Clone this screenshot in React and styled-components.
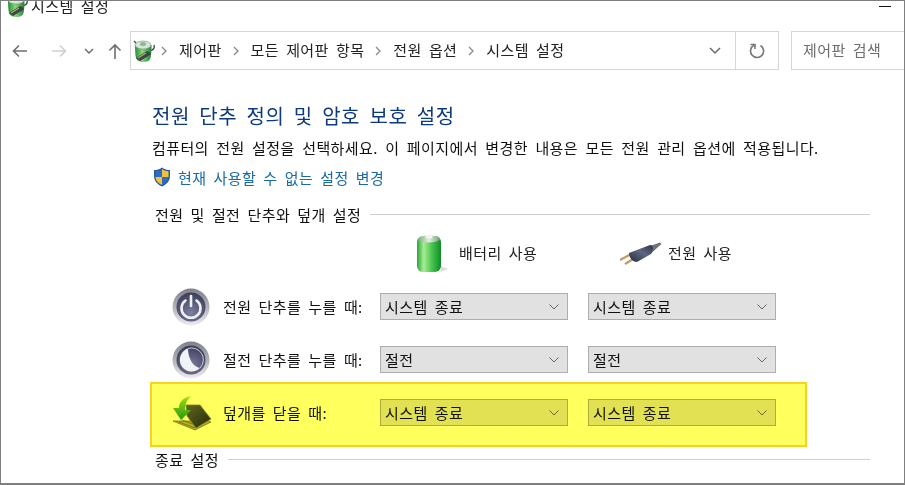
import React from 'react';
import styled, { createGlobalStyle, css } from 'styled-components';

const Global = createGlobalStyle`
  html, body { margin: 0; padding: 0; background: #fff; }
  body { font-family: "Noto Sans CJK KR", "Noto Sans", sans-serif; color: #111; }
`;

// Malgun Gothic 폭에 맞추기 위한 자간/어간
const uiText = css`
  font-size: 15px; letter-spacing: 0.4px; word-spacing: 3.4px; white-space: nowrap;
`;

const Win = styled.div`
  box-sizing: border-box; width: 905px; height: 485px; overflow: hidden;
  background: #fff; border: 1px solid #7f7f7f; border-width: 1px 1px 2px 1px;
`;

const TitleBar = styled.div`
  display: flex; align-items: flex-start; height: 30px; padding-left: 5px; overflow: hidden;
`;
const TitleIcon = styled.div` margin-top: -7px; height: 20px; `;
const TitleText = styled.div`
  ${uiText}
  line-height: 16px; margin: -3px 0 0 3px; color: #222;
`;
const MinBtn = styled.div`
  width: 12px; height: 1px; background: #111; margin: 5px 13px 0 auto;
`;

const Toolbar = styled.div` display: flex; align-items: stretch; height: 39px; `;
const NavBtns = styled.div`
  display: flex; align-items: center; width: 129px; flex: none; padding-top: 1px; box-sizing: border-box;
`;
const NavIcon = styled.svg`
  flex: none; margin-left: ${p => p.$ml}px; color: ${p => p.$c};
`;
const Address = styled.div`
  display: flex; align-items: center; width: 649px; flex: none; box-sizing: border-box;
  border: 1px solid #d6d6d6; padding-left: 2px;
`;
const Crumb = styled.span` ${uiText} color: #222; padding-bottom: 3px; `;
const CrumbSep = styled.svg` flex: none; margin: 0 12px 0 ${p => p.$ml}px; `;
const AddrEnd = styled.div`
  margin-left: auto; display: flex; align-items: center; height: 100%;
`;
const RefreshBox = styled.div`
  width: 42px; height: 100%; margin-left: 14px; border-left: 1px solid #d6d6d6;
  display: flex; align-items: center; justify-content: center;
`;
const Search = styled.div`
  ${uiText}
  flex: 1; margin-left: 12px; border: 1px solid #d6d6d6; border-right: 0;
  display: flex; align-items: center; padding: 0 0 3px 11px;
  color: #6d6d6d; overflow: hidden;
`;

const Body = styled.div` padding: 31px 34px 0 151px; `;
const Heading = styled.h1`
  margin: 0; font-size: 20px; line-height: 30px; font-weight: 400; color: #0b3a80;
  letter-spacing: 0.5px; word-spacing: 4.5px; white-space: nowrap;
`;
const Desc = styled.p`
  ${uiText}
  margin: 3px 0 0; line-height: 28px; color: #111; word-spacing: 3.7px;
`;
const LinkRow = styled.div`
  ${uiText}
  display: flex; align-items: center; gap: 7px; height: 30px; margin-left: 1px;
  color: #1a6aa5;
`;
const SectionTitle = styled.div`
  ${uiText}
  display: flex; align-items: center; gap: 9px; height: 24px; margin-top: ${p => p.$mt}px; padding-left: 3px;
  color: #111;
  &::after { content: ""; flex: 1; height: 1px; background: #cfcfcf; }
`;
const HeadRow = styled.div`
  display: flex; align-items: center; height: 42px; margin: 7px 0 0 263px;
`;
const HeadCell = styled.div`
  ${uiText}
  display: flex; align-items: center; width: ${p => p.$w}px; flex: none; color: #222;
`;
const HeadLabel = styled.span` margin-left: ${p => p.$ml}px; padding-bottom: 3px; `;
const Row = styled.div`
  position: relative; display: grid; grid-template-columns: 50px 158px 188px 188px; align-items: center;
  height: 27px; margin: ${p => p.$mt}px 0 0 20px; width: 604px;
`;
const RowIcon = styled.div` display: flex; align-items: center; height: 27px; `;
const RowLabel = styled.div` ${uiText} color: #111; margin-left: 1px; `;
const Select = styled.div`
  ${uiText}
  box-sizing: border-box; display: flex; align-items: center; justify-content: space-between;
  height: 27px; width: 188px; margin-left: ${p => p.$ml || 0}px;
  padding: 0 8px 0 4px; background: #e1e1e1; border: 1px solid #adadad; color: #111;
`;
const Highlight = styled.div`
  position: absolute; left: -22px; right: -31px; top: -17px; bottom: -21px;
  box-sizing: border-box; background: #ffff5e; border: 2px solid #f6d31f;
  mix-blend-mode: multiply; pointer-events: none;
`;

const Chevron = () => (
  <svg width="10" height="6" viewBox="0 0 10 6"><path d="M.5.5L5 5 9.500.5" fill="none" stroke="#666" strokeWidth="1"/></svg>
);

const CplIcon = ({ id }) => (
  <svg width="22" height="24" viewBox="0 0 22 24">
    <defs>
      <linearGradient id={id} x1="0" x2="1" y1="0" y2="0">
        <stop offset="0" stopColor="#2a8a3a"/><stop offset=".45" stopColor="#86d87a"/><stop offset="1" stopColor="#23803a"/>
      </linearGradient>
    </defs>
    <path d="M1 2l3 3M21 6c1 3-1 5-4 6" fill="none" stroke="#3c4a44" strokeWidth="1.300"/>
    <path d="M2 6c0 0 0 9 1 13 1 3 4 4 7.500 4s6-1 7-4c1-4 1-13 1-13z" fill={`url(#${id})`}/>
    <ellipse cx="10" cy="6" rx="8" ry="4" fill="#d6e6d6" stroke="#6d9a72" strokeWidth=".6"/>
    <ellipse cx="10" cy="5" rx="3" ry="2" fill="#8db894"/>
    <path d="M3 19l11-7 4 2-1 2-10 6z" fill="#3e4548"/>
    <path d="M5 19l8-5" stroke="#a9b06a" strokeWidth="1.200"/>
  </svg>
);

const Shield = () => (
  <svg width="18" height="20" viewBox="0 0 18 20">
    <path d="M9 .5C6.500 2.500 4 3 1 3v6c0 5 3.500 8.500 8 10.500 4.500-2 8-5.500 8-10.500V3c-3 0-5.500-.5-8-2.500z" fill="#2a5a9c"/>
    <path d="M9 2v8H2.500V4.300C5 4.200 7 3.500 9 2z" fill="#2d6cc0"/>
    <path d="M9 2c2 1.500 4 2.200 6.500 2.300V10H9z" fill="#f3c13b"/>
    <path d="M2.500 10H9v8c-3.500-1.700-6.500-4.300-6.500-8z" fill="#f3c13b"/>
    <path d="M9 10h6.500c0 3.700-3 6.300-6.500 8z" fill="#2d6cc0"/>
  </svg>
);

const Battery = () => (
  <svg width="34" height="42" viewBox="0 0 34 42">
    <defs>
      <linearGradient id="bat" x1="0" x2="1" y1="0" y2="0">
        <stop offset="0" stopColor="#2aa63c"/><stop offset=".28" stopColor="#a8ec92"/>
        <stop offset=".6" stopColor="#4cc852"/><stop offset="1" stopColor="#0f8a2a"/>
      </linearGradient>
      <linearGradient id="batTop" x1="0" x2="1" y1="0" y2="0">
        <stop offset="0" stopColor="#7fae84"/><stop offset=".5" stopColor="#e4ece4"/><stop offset="1" stopColor="#6f9f76"/>
      </linearGradient>
    </defs>
    <path d="M26 33l7 3-7 3z" fill="#dcdcdc"/>
    <rect x="2" y="3" width="24" height="36" rx="6" fill="url(#bat)"/>
    <ellipse cx="14" cy="6" rx="11" ry="3.500" fill="url(#batTop)"/>
    <ellipse cx="14" cy="4" rx="3.500" ry="1.500" fill="#f2f5f2"/>
  </svg>
);

const Plug = () => (
  <svg width="42" height="24" viewBox="0 0 42 24">
    <defs>
      <linearGradient id="plg" x1="0" x2="1" y1="1" y2="0">
        <stop offset="0" stopColor="#262b3c"/><stop offset=".55" stopColor="#5f6880"/><stop offset="1" stopColor="#2f3547"/>
      </linearGradient>
    </defs>
    <path d="M0 18l13-7" stroke="#c4985c" strokeWidth="2.200"/>
    <path d="M5 22l13-8" stroke="#c4985c" strokeWidth="2.200"/>
    <path d="M30 4L40 .5l1.500 1.500-9 8z" fill="#71747c"/>
    <path d="M9 11L30 3c4 0 4 6 1 9L17 20c-4 0-8-4-8-9z" fill="url(#plg)"/>
  </svg>
);

const RoundIcon = ({ id, children }) => (
  <svg width="40" height="40" viewBox="0 0 40 40" style={{ flex: 'none' }}>
    <defs>
      <linearGradient id={id} x1="0" x2="0" y1="0" y2="1">
        <stop offset="0" stopColor="#7f7f88"/><stop offset=".6" stopColor="#bcbcc2"/><stop offset="1" stopColor="#eeeef1"/>
      </linearGradient>
      <radialGradient id={`${id}b`} cx=".5" cy=".7" r=".7">
        <stop offset="0" stopColor="#7d7f9e"/><stop offset="1" stopColor="#3a3c58"/>
      </radialGradient>
    </defs>
    <circle cx="19" cy="20" r="18.500" fill={`url(#${id})`}/>
    <circle cx="19" cy="20" r="14.500" fill={`url(#${id}b)`}/>
    {children}
  </svg>
);

const PowerIcon = () => (
  <RoundIcon id="pw">
    <path d="M13.500 13.500a9.500 9.500 0 1 0 11 0" fill="none" stroke="#eef0f6" strokeWidth="2.600" strokeLinecap="round"/>
    <path d="M19 9v10" stroke="#eef0f6" strokeWidth="2.600" strokeLinecap="round"/>
  </RoundIcon>
);

const SleepIcon = () => (
  <RoundIcon id="sl">
    <path d="M16 8.500A11.800 11.800 0 1 0 28 28C21 27 16 18 16 8.500z" fill="#f2f3f8"/>
    <path d="M16 8.500A11.800 11.800 0 0 1 28 28" fill="none" stroke="#d8d9e6" strokeWidth=".9"/>
  </RoundIcon>
);

const LidIcon = () => (
  <svg width="40" height="36" viewBox="0 0 40 36" style={{ flex: 'none' }}>
    <defs>
      <linearGradient id="lidG" x1="0" x2="0" y1="0" y2="1">
        <stop offset="0" stopColor="#a5dc2a"/><stop offset="1" stopColor="#239a2a"/>
      </linearGradient>
      <linearGradient id="lidD" x1="0" x2="1" y1="0" y2="1">
        <stop offset="0" stopColor="#60664c"/><stop offset="1" stopColor="#262a22"/>
      </linearGradient>
    </defs>
    <path d="M1 26l22 9 16-8-8-3-14 2z" fill="#b5ad4c" stroke="#6f6a2c" strokeWidth=".7"/>
    <path d="M7 27l16 6M10 25l16 6" stroke="#6f6a2c" strokeWidth=".8"/>
    <path d="M14 10h14l11 14-15 9-9-12z" fill="url(#lidD)" stroke="#83855a" strokeWidth=".8"/>
    <path d="M19 1C10 3 7 8 7 13H1l8 12 10-10h-6c0-6 2-10 6-14z" fill="url(#lidG)"/>
  </svg>
);

const crumbs = ['제어판', '모든 제어판 항목', '전원 옵션', '시스템 설정'];

const rows = [
  { label: '전원 단추를 누를 때:', icon: <PowerIcon />, value: '시스템 종료', mt: 18 },
  { label: '절전 단추를 누를 때:', icon: <SleepIcon />, value: '절전', mt: 26 },
  { label: '덮개를 닫을 때:', icon: <LidIcon />, value: '시스템 종료', mt: 26, hi: true },
];

export default function App() {
  return (
    <>
      <Global />
      <Win>
        <TitleBar>
          <TitleIcon><CplIcon id="cpl1" /></TitleIcon>
          <TitleText>시스템 설정</TitleText>
          <MinBtn />
        </TitleBar>
        <Toolbar>
          <NavBtns>
            <NavIcon $ml={11} $c="#6e6e6e" width="16" height="14" viewBox="0 0 16 14">
              <path d="M15 7H2M7 1.500L1.500 7 7 12.500" fill="none" stroke="currentColor" strokeWidth="1.600"/>
            </NavIcon>
            <NavIcon $ml={23} $c="#d0d0d0" width="16" height="14" viewBox="0 0 16 14">
              <path d="M1 7h13M9 1.500L14.500 7 9 12.500" fill="none" stroke="currentColor" strokeWidth="1.600"/>
            </NavIcon>
            <NavIcon $ml={17} $c="#6e6e6e" width="10" height="7" viewBox="0 0 10 7">
              <path d="M1 1l4 4 4-4" fill="none" stroke="currentColor" strokeWidth="1.500"/>
            </NavIcon>
            <NavIcon $ml={14} $c="#6e6e6e" width="14" height="16" viewBox="0 0 14 16">
              <path d="M7 16V2M1.500 7.500L7 2l5.500 5.500" fill="none" stroke="currentColor" strokeWidth="1.600"/>
            </NavIcon>
          </NavBtns>
          <Address>
            <CplIcon id="cpl2" />
            {crumbs.map((c, i) => (
              <React.Fragment key={c}>
                <CrumbSep $ml={i === 0 ? 6 : 11} width="6" height="10" viewBox="0 0 6 10">
                  <path d="M1 1l4 4-4 4" fill="none" stroke="#8a8a8a" strokeWidth="1.300"/>
                </CrumbSep>
                <Crumb>{c}</Crumb>
              </React.Fragment>
            ))}
            <AddrEnd>
              <svg width="12" height="8" viewBox="0 0 12 8"><path d="M1 1l5 5 5-5" fill="none" stroke="#6a6a6a" strokeWidth="1.500"/></svg>
              <RefreshBox>
                <svg width="16" height="16" viewBox="0 0 16 16">
                  <path d="M5 2.300A6.500 6.500 0 1 0 11.500 2.500" fill="none" stroke="#777" strokeWidth="1.600"/>
                  <path d="M1.500 1.500H6V6" fill="none" stroke="#777" strokeWidth="1.600"/>
                </svg>
              </RefreshBox>
            </AddrEnd>
          </Address>
          <Search>제어판 검색</Search>
        </Toolbar>
        <Body>
          <Heading>전원 단추 정의 및 암호 보호 설정</Heading>
          <Desc>컴퓨터의 전원 설정을 선택하세요. 이 페이지에서 변경한 내용은 모든 전원 관리 옵션에 적용됩니다.</Desc>
          <LinkRow><Shield />현재 사용할 수 없는 설정 변경</LinkRow>
          <SectionTitle $mt={10}>전원 및 절전 단추와 덮개 설정</SectionTitle>
          <HeadRow>
            <HeadCell $w={205}><Battery /><HeadLabel $ml={10}>배터리 사용</HeadLabel></HeadCell>
            <HeadCell $w={170}><Plug /><HeadLabel $ml={6}>전원 사용</HeadLabel></HeadCell>
          </HeadRow>
          {rows.map(r => (
            <Row key={r.label} $mt={r.mt}>
              <RowIcon>{r.icon}</RowIcon>
              <RowLabel>{r.label}</RowLabel>
              <Select>{r.value}<Chevron /></Select>
              <Select $ml={20}>{r.value}<Chevron /></Select>
              {r.hi && <Highlight />}
            </Row>
          ))}
          <SectionTitle $mt={21}>종료 설정</SectionTitle>
        </Body>
      </Win>
    </>
  );
}
